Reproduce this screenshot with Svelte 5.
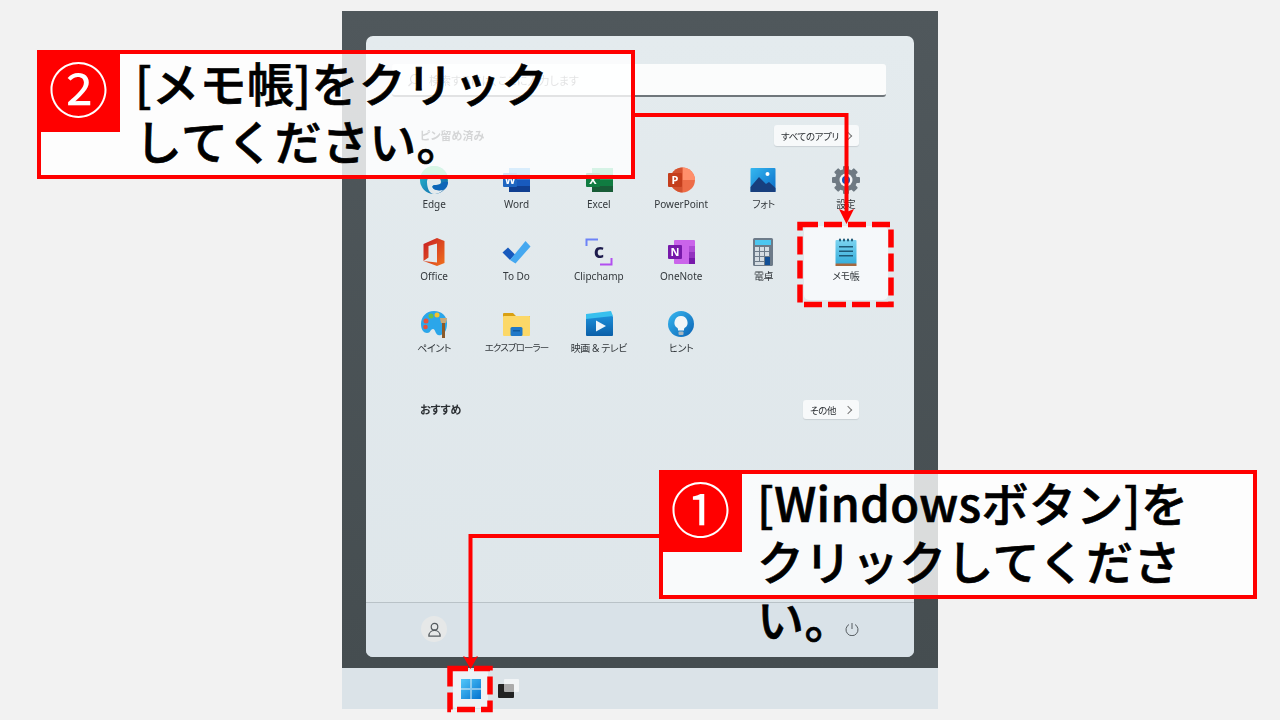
<script>
  const apps = ['Edge', 'Word', 'Excel', 'PowerPoint', 'フォト', '設定', 'Office', 'To Do', 'Clipchamp', 'OneNote', '電卓', 'メモ帳', 'ペイント', 'エクスプローラー', '映画 & テレビ', 'ヒント']
  const teeth = [0, 45, 90, 135, 180, 225, 270, 315]
  const keys = [[8, 10], [13, 10], [18, 10], [8, 15], [13, 15], [18, 15], [8, 20], [13, 20]]
  const isLatin = (name) => /^[A-Za-z ]+$/.test(name)
</script>

{#snippet icon(name)}
  <svg class="app-icon" viewBox="0 0 30 30" aria-hidden="true">
    {#if name === 'Edge'}
      <defs>
        <linearGradient id="edge-a" x1="0" y1="0" x2="1" y2="1"><stop offset="0" stop-color="#2bc3d2" /><stop offset="1" stop-color="#0c59a4" /></linearGradient>
      </defs>
      <circle cx="15" cy="15" r="14" fill="url(#edge-a)" />
      <path d="M15 9c6 0 12 2 14 7 1-8-6-15-14-15C9 1 4 5 2 10c3-2 8-1 13-1z" fill="#3fd07f" />
      <path d="M8 17c0-5 5-7 9-6 3 1 5 3 5 6 0 2-2 3-5 3-4 0-5 2-2 4 2 1 6 2 10 0-3 4-7 5-10 5C10 29 8 22 8 17z" fill="#e3eaed" />
      <path d="M17 20c3 0 6-1 7-3h5c0 4-2 7-5 8-4 1-9 0-10-2-1-2 0-3 3-3z" fill="#0e66b8" />
    {:else if name === 'Word'}
      <rect x="8" y="3" width="21" height="6" fill="#41a5ee" />
      <rect x="8" y="9" width="21" height="6" fill="#2b7cd3" />
      <rect x="8" y="15" width="21" height="6" fill="#185abd" />
      <rect x="8" y="21" width="21" height="6" fill="#103f91" />
      <rect x="2" y="8" width="14" height="14" rx="1" fill="#1f66c1" />
      <text x="9" y="19" class="badge">W</text>
    {:else if name === 'Excel'}
      <rect x="8" y="3" width="21" height="6" fill="#33c481" />
      <rect x="8" y="9" width="21" height="6" fill="#21a366" />
      <rect x="8" y="15" width="21" height="6" fill="#107c41" />
      <rect x="8" y="21" width="21" height="6" fill="#185c37" />
      <rect x="2" y="8" width="14" height="14" rx="1" fill="#107c41" />
      <text x="9" y="19" class="badge">X</text>
    {:else if name === 'PowerPoint'}
      <circle cx="16.5" cy="15" r="12.5" fill="#ed6c47" />
      <path d="M16.5 2.500a12.500 12.500 0 0 1 12.500 12.500H16.500z" fill="#ff8f6b" />
      <path d="M16.500 2.500a12.500 12.500 0 0 0 0 25z" fill="#d35230" />
      <rect x="2" y="8" width="14" height="14" rx="1" fill="#c43e1c" />
      <text x="9" y="19" class="badge">P</text>
    {:else if name === 'フォト'}
      <defs>
        <linearGradient id="photo-a" x1="0" y1="0" x2="1" y2="1"><stop offset="0" stop-color="#35b8f0" /><stop offset="1" stop-color="#0a6cc8" /></linearGradient>
      </defs>
      <rect x="2.500" y="3" width="25" height="24" rx="1" fill="url(#photo-a)" />
      <circle cx="19.500" cy="9" r="2" fill="#fff" />
      <path d="M2.500 22 11 12l7 7 3-2 6.500 6v4h-25z" fill="#173f7e" />
    {:else if name === '設定'}
      <g fill="#6f7a83">
        {#each teeth as a}
          <rect x="12" y="1" width="6" height="6" rx="1" transform="rotate({a} 15 15)" />
        {/each}
      </g>
      <circle cx="15" cy="15" r="11" fill="#6f7a83" />
      <circle cx="15" cy="15" r="6.500" fill="#f2f5f7" />
      <circle cx="15" cy="15" r="4" fill="#0f56b8" />
    {:else if name === 'Office'}
      <defs>
        <linearGradient id="office-a" x1="0" y1="0" x2="1" y2="1"><stop offset="0" stop-color="#c71c24" /><stop offset="1" stop-color="#f0701c" /></linearGradient>
      </defs>
      <path d="M18 1 25.500 4V26L18 29 4.500 24 18 25.500V6.500L9.500 9V20.500L4.500 24V7z" fill="url(#office-a)" />
    {:else if name === 'To Do'}
      <path d="M1.500 15.500 7 10.500 14 17.500 9 23z" fill="#185abd" />
      <path d="M9 23 24.500 4 29.500 9.500 14.500 26.500z" fill="#45a8f0" />
    {:else if name === 'Clipchamp'}
      <path d="M2.500 9V2.500H14" fill="none" stroke="#6d83f7" stroke-width="2" />
      <path d="M27.500 21v6.500H16" fill="none" stroke="#b24ff0" stroke-width="2" />
      <text x="15" y="20.500" class="clip">c</text>
    {:else if name === 'OneNote'}
      <rect x="8" y="3" width="21" height="24" rx="1" fill="#ca64ea" />
      <rect x="23" y="9" width="6" height="6" fill="#ae4bd5" />
      <rect x="23" y="15" width="6" height="6" fill="#9332bf" />
      <rect x="23" y="21" width="6" height="6" fill="#7719aa" />
      <rect x="2" y="8" width="14" height="14" rx="1" fill="#7719aa" />
      <text x="9" y="19" class="badge">N</text>
    {:else if name === '電卓'}
      <rect x="5" y="1" width="20" height="28" rx="1.500" fill="#6d7b89" />
      <rect x="7" y="3" width="16" height="5" fill="#4cc7f0" />
      {#each keys as k}
        <rect x={k[0] - 1} y={k[1]} width="4" height="4" fill="#d5dde3" />
      {/each}
      <rect x="17" y="20" width="5" height="8" fill="#114f96" />
      <rect x="7" y="25" width="9" height="3" fill="#d5dde3" />
    {:else if name === 'メモ帳'}
      <defs>
        <linearGradient id="note-a" x1="0" y1="0" x2="0" y2="1"><stop offset="0" stop-color="#7bd3f0" /><stop offset="1" stop-color="#35aedb" /></linearGradient>
      </defs>
      <rect x="4.500" y="3" width="21" height="24" rx="1" fill="url(#note-a)" />
      <rect x="4.500" y="26.500" width="21" height="2.500" fill="#a5683f" />
      <g fill="#1d5a78">
        <rect x="8" y="1.500" width="2" height="3" rx="1" />
        <rect x="12" y="1.500" width="2" height="3" rx="1" />
        <rect x="16" y="1.500" width="2" height="3" rx="1" />
        <rect x="20" y="1.500" width="2" height="3" rx="1" />
        <rect x="8" y="9" width="14" height="1.500" />
        <rect x="8" y="13.500" width="14" height="1.500" />
        <rect x="8" y="18" width="14" height="1.500" />
      </g>
    {:else if name === 'ペイント'}
      <path d="M15 2C7 2 2 8 2 15c0 6 3 9 6 9 4 0 3-4 6-4 3 0 2 8 8 6 5-2 6-7 6-12C28 7 23 2 15 2z" fill="#2ba6ea" />
      <circle cx="7" cy="12" r="2.500" fill="#e8503a" />
      <circle cx="12" cy="7" r="2.500" fill="#6cc04a" />
      <circle cx="18" cy="6" r="2.500" fill="#f5c32c" />
      <circle cx="6.500" cy="18" r="2.300" fill="#e8503a" />
      <path d="M21 9h7l-1 5h-5z" fill="#c9a878" />
      <rect x="23" y="14" width="3" height="15" fill="#8a5a2b" />
    {:else if name === 'エクスプローラー'}
      <path d="M2 5a1 1 0 0 1 1-1h9l3 3h14v4H2z" fill="#d9a012" />
      <rect x="2" y="7" width="27" height="20" rx="1" fill="#fcd868" />
      <rect x="9.500" y="18" width="12" height="9" rx="1.500" fill="#1f78c8" />
      <rect x="12" y="21" width="7" height="1.500" fill="#0f5aa0" />
    {:else if name === '映画 & テレビ'}
      <defs>
        <linearGradient id="movie-a" x1="0" y1="0" x2="0" y2="1"><stop offset="0" stop-color="#1c8ed8" /><stop offset="1" stop-color="#0b5fa8" /></linearGradient>
      </defs>
      <rect x="2" y="7" width="27" height="20" rx="1" fill="url(#movie-a)" />
      <path d="M2 5 27 2l2 5-27 3z" fill="#38c0ee" />
      <path d="M12 11.500 22 17 12 22.500z" fill="#eef5fa" />
    {:else if name === 'ヒント'}
      <defs>
        <linearGradient id="tip-a" x1="0" y1="0" x2="1" y2="1"><stop offset="0" stop-color="#38b8f0" /><stop offset="1" stop-color="#0b62b4" /></linearGradient>
      </defs>
      <circle cx="15" cy="15" r="13" fill="url(#tip-a)" />
      <path d="M15 7a6.500 6.500 0 0 0-3.500 12c.5.500.5 1.500.5 2.500h6c0-1 0-2 .5-2.500A6.500 6.500 0 0 0 15 7z" fill="#f2f6f8" />
      <rect x="12.500" y="22.500" width="5" height="3.500" rx="1" fill="#aab6be" />
    {/if}
  </svg>
{/snippet}

<div class="page">
  <div class="screen">
    <div class="desk">
      <div class="menu">
        <div class="menu-main">
          <div class="search">
            <svg class="lens" viewBox="0 0 14 14" aria-hidden="true"><circle cx="8" cy="6" r="4.500" /><path d="M5 9.500 1.500 13" /></svg>
            <span>検索するには、ここに入力します</span>
          </div>

          <div class="section-head pinned-head">
            <span class="section-title">ピン留め済み</span>
            <span class="chip">すべてのアプリ<i class="chev"></i></span>
          </div>

          <div class="apps">
            {#each apps as name}
              <div class="app" class:active={name === 'メモ帳'}>
                {@render icon(name)}
                <span class:jp={!isLatin(name)} class:tight={name === 'エクスプローラー'}>{name}</span>
              </div>
            {/each}
          </div>

          <div class="section-head recommend-head">
            <span class="section-title">おすすめ</span>
            <span class="chip small">その他<i class="chev"></i></span>
          </div>
        </div>

        <div class="menu-foot">
          <div class="avatar">
            <svg viewBox="0 0 16 16" aria-hidden="true"><circle cx="8" cy="5" r="3.500" /><path d="M2 15c0-4 3-6 6-6s6 2 6 6z" /></svg>
          </div>
          <svg class="power" viewBox="0 0 14 14" aria-hidden="true"><path d="M4 2.500a6 6 0 1 0 6 0" /><path d="M7 1v6" /></svg>
        </div>
      </div>
    </div>

    <div class="taskbar">
      <div class="start">
        <svg viewBox="0 0 20 20" aria-hidden="true">
          <defs>
            <linearGradient id="win-a" x1="0" y1="0" x2="1" y2="1"><stop offset="0" stop-color="#52c8fa" /><stop offset="1" stop-color="#0472cf" /></linearGradient>
          </defs>
          <rect width="20" height="20" fill="url(#win-a)" />
          <path d="M9.500 0v20h1V0zM0 9.500h20v1H0z" fill="#eef3f6" />
        </svg>
      </div>
      <div class="taskview">
        <span class="front"></span>
        <span class="back"></span>
      </div>
    </div>
  </div>

  <svg class="marks" viewBox="0 0 1280 720" aria-hidden="true">
    <path class="line" d="M635 115H846.500V214" />
    <path class="head" d="M839 209 846.500 224 854 209 846.500 212z" />
    <path class="line" d="M660 536H470.500V660" />
    <path class="head" d="M463 656 470.500 669 478 656 470.500 659z" />
    <rect class="dash" x="800" y="224.500" width="91" height="80" />
    <rect class="dash" x="450" y="668.500" width="40" height="41" />
  </svg>

  <div class="callout two">
    <div class="tag">②</div>
    <p>[メモ帳]をクリックしてください。</p>
  </div>

  <div class="callout one">
    <div class="tag">①</div>
    <p>[Windowsボタン]をクリックしてください。</p>
  </div>
</div>

<style>
  :global(body) {
    margin: 0;
    background: #f2f2f2;
  }
  .page {
    position: relative;
    width: 1280px;
    height: 720px;
    padding-top: 11px;
    box-sizing: border-box;
    overflow: hidden;
    font-family: "Noto Sans", "Noto Sans CJK JP", sans-serif;
    font-feature-settings: "palt";
    color: #2b2f33;
  }
  .screen {
    width: 596px;
    height: 698px;
    margin: 0 auto;
    display: flex;
    flex-direction: column;
    filter: blur(0.4px);
  }
  .desk {
    flex: 1;
    min-height: 0;
    padding: 25px 24px 11px;
    background: linear-gradient(#50585c, #454d50);
  }
  .menu {
    height: 100%;
    display: flex;
    flex-direction: column;
    border-radius: 7px;
    background: linear-gradient(#e4ebee, #dee6ea);
    overflow: hidden;
  }
  .menu-main {
    flex: 1;
    padding: 28px 28px 0 26px;
  }
  .search {
    height: 33px;
    box-sizing: border-box;
    display: flex;
    align-items: center;
    gap: 8px;
    padding-left: 15px;
    background: #fbfcfc;
    border-bottom: 2px solid #6f767b;
    border-radius: 3px;
    font-size: 11px;
    color: #70767a;
  }
  .lens {
    width: 14px;
    height: 14px;
    fill: none;
    stroke: #70767a;
    stroke-width: 1.2;
  }
  .section-head {
    display: flex;
    align-items: center;
    justify-content: space-between;
    padding: 0 27px 0 28px;
  }
  .pinned-head {
    margin-top: 28px;
    height: 21px;
  }
  .recommend-head {
    margin-top: 29px;
    height: 19px;
  }
  .section-title {
    padding-bottom: 2px;
    font-size: 11px;
    font-weight: 700;
  }
  .chip {
    height: 21px;
    width: 85px;
    box-sizing: border-box;
    display: flex;
    align-items: center;
    justify-content: space-between;
    padding: 0 8px 0 7px;
    background: #f7f9fa;
    border-radius: 3px;
    box-shadow: 0 1px 1px #c9d0d4;
    font-size: 9.500px;
    letter-spacing: -0.4px;
    white-space: nowrap;
  }
  .chip.small {
    height: 19px;
    width: 56px;
  }
  .chev {
    width: 5px;
    height: 5px;
    border-top: 1px solid #777;
    border-right: 1px solid #777;
    transform: rotate(45deg);
  }
  .apps {
    margin: 9px -1px 0 1px;
    display: grid;
    grid-template-columns: repeat(6, 1fr);
    grid-auto-rows: 72px;
  }
  .app {
    display: flex;
    flex-direction: column;
    align-items: center;
    padding-top: 10px;
    box-sizing: border-box;
    font-size: 10px;
    line-height: 14px;
    color: #33383c;
    white-space: nowrap;
    border-radius: 4px;
  }
  .app span {
    margin-top: 2px;
  }
  .app span.jp {
    letter-spacing: -0.4px;
  }
  .app span.tight {
    font-size: 9.500px;
    letter-spacing: -0.9px;
  }
  .app.active {
    background: #f5f8fa;
    box-shadow: 0 0 0 1px #f5f8fa;
  }
  .app-icon {
    width: 30px;
    height: 30px;
    flex: none;
  }
  .badge {
    font-size: 11px;
    font-weight: 700;
    fill: #fff;
    text-anchor: middle;
  }
  .clip {
    font-size: 20px;
    font-weight: 700;
    fill: #1d1b4c;
    text-anchor: middle;
  }
  .menu-foot {
    height: 55px;
    flex: none;
    box-sizing: border-box;
    display: flex;
    align-items: center;
    justify-content: space-between;
    padding: 0 55px 2px;
    border-top: 1px solid #b9c2c7;
    background: #d9e2e8;
  }
  .avatar {
    width: 26px;
    height: 26px;
    display: flex;
    align-items: center;
    justify-content: center;
    border-radius: 50%;
    background: #e6e8e8;
  }
  .avatar svg {
    width: 15px;
    height: 15px;
    fill: none;
    stroke: #555b5f;
    stroke-width: 1.300;
  }
  .power {
    width: 14px;
    height: 14px;
    fill: none;
    stroke: #555b5f;
    stroke-width: 1;
  }
  .taskbar {
    height: 41px;
    flex: none;
    display: flex;
    align-items: center;
    padding-left: 111px;
    background: #dbe3e8;
  }
  .start {
    width: 35px;
    height: 38px;
    display: flex;
    align-items: center;
    justify-content: center;
    background: #eef2f5;
    border-radius: 3px;
  }
  .start svg {
    width: 20px;
    height: 20px;
  }
  .taskview {
    position: relative;
    width: 21px;
    height: 19px;
    margin-left: 10px;
  }
  .back {
    position: absolute;
    left: 6px;
    top: 0;
    width: 15px;
    height: 13px;
    background: rgba(255, 255, 255, 0.62);
    border-radius: 1px;
  }
  .front {
    position: absolute;
    left: 0;
    bottom: 0;
    width: 16px;
    height: 14px;
    background: #222;
    border-radius: 1px;
  }
  .marks {
    position: absolute;
    inset: 0;
    width: 1280px;
    height: 720px;
  }
  .line {
    fill: none;
    stroke: #f00;
    stroke-width: 4;
  }
  .head {
    fill: #f00;
  }
  .dash {
    fill: none;
    stroke: #f00;
    stroke-width: 5.500;
    stroke-dasharray: 18 6;
  }
  .callout {
    position: absolute;
    width: 598px;
    height: 129px;
    box-sizing: border-box;
    border: 4px solid #f00;
    background: rgba(255, 255, 255, 0.8);
    color: #000;
    font-feature-settings: normal;
  }
  .callout.two {
    left: 37px;
    top: 50px;
  }
  .callout.one {
    left: 659px;
    top: 470px;
  }
  .tag {
    position: absolute;
    left: -4px;
    top: -4px;
    width: 83px;
    height: 82px;
    box-sizing: border-box;
    padding-bottom: 8px;
    display: flex;
    align-items: center;
    justify-content: center;
    background: #f00;
    color: #fff;
    font-family: "Noto Sans CJK JP", sans-serif;
    font-size: 60px;
    line-height: 1;
  }
  .callout p {
    margin: -1px 0 0;
    width: 445px;
    padding-left: 94px;
    font-family: "Noto Sans CJK JP", sans-serif;
    font-weight: 500;
    font-size: 47px;
    line-height: 58px;
    letter-spacing: 0.4px;
    -webkit-text-stroke: 0.7px #000;
  }
</style>
